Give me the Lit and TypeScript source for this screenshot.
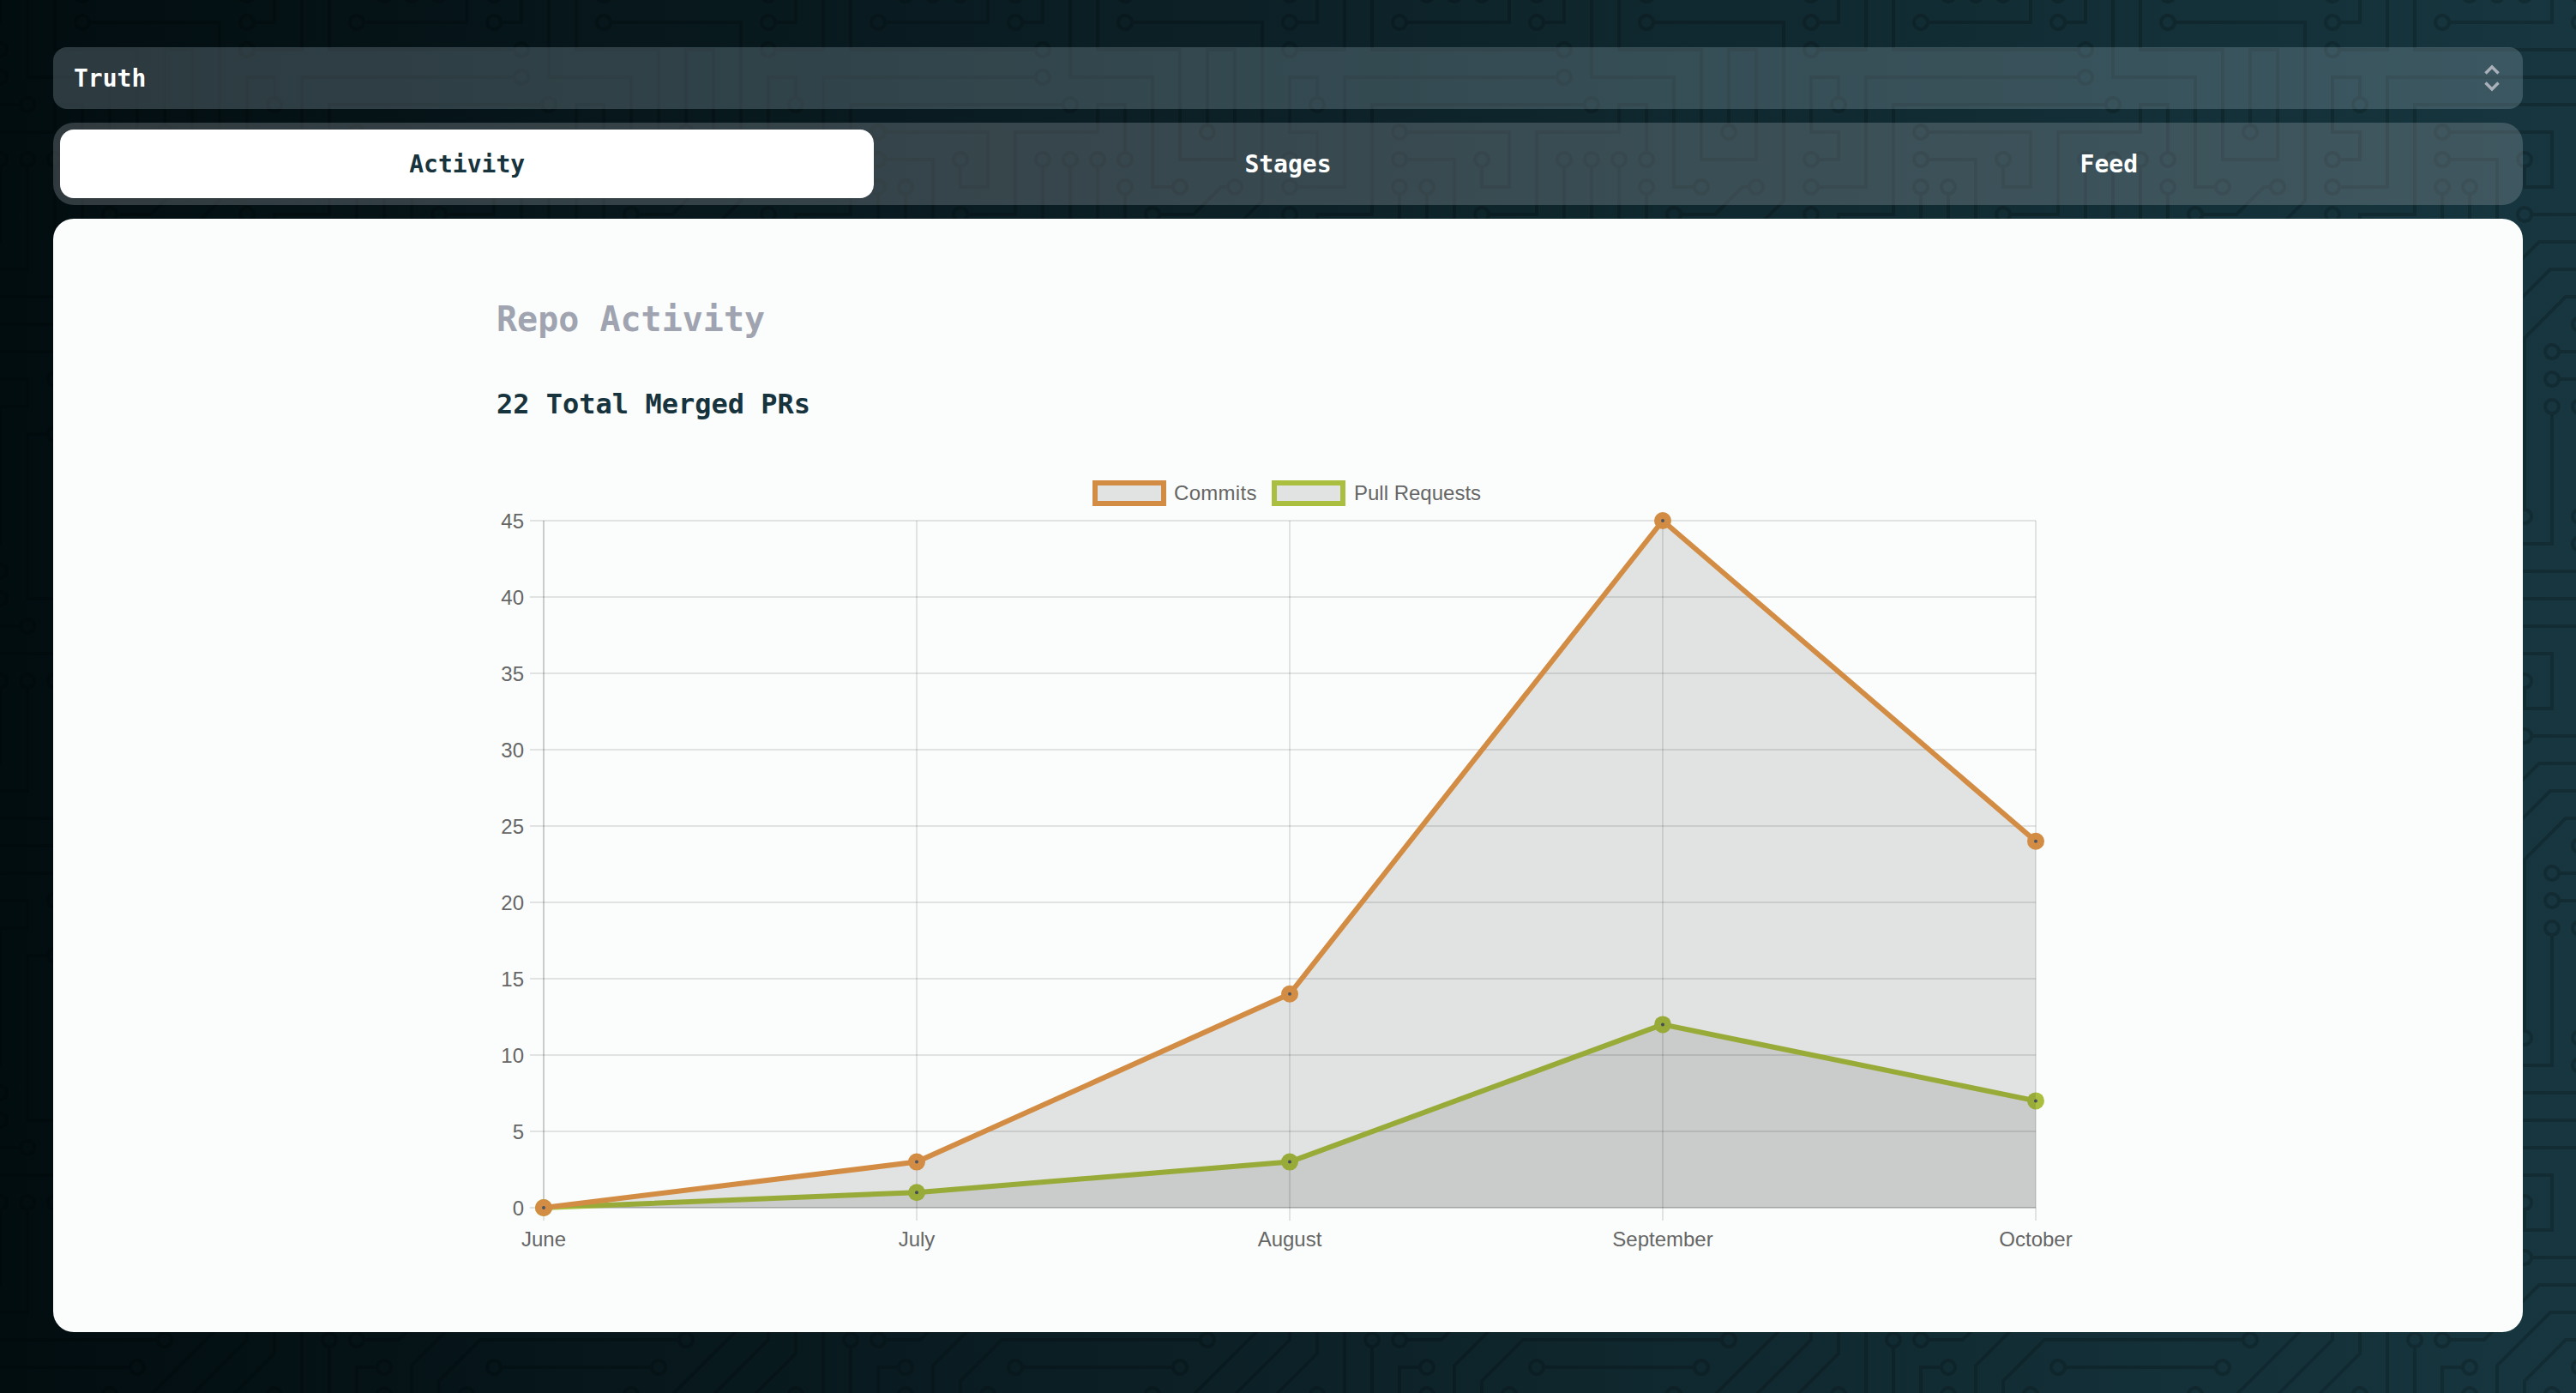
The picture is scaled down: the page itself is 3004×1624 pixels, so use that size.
import { LitElement, css, html, svg } from "lit";
import { customElement, state } from "lit/decorators.js";

// hero pattern "circuit board", drawn at 2x
const CIRCUIT =
  "M44.1 224a5 5 0 1 1 0 2H0v-2h44.1zm160 48a5 5 0 1 1 0 2H82v-2h122.1zm57.8-46a5 5 0 1 1 0-2H304v2h-42.1zm0 16a5 5 0 1 1 0-2H304v2h-42.1zm6.2-114a5 5 0 1 1 0 2h-86.2a5 5 0 1 1 0-2h86.2zm-256-48a5 5 0 1 1 0 2H0v-2h12.1zm185.8 34a5 5 0 1 1 0-2h86.2a5 5 0 1 1 0 2h-86.2zM258 12.1a5 5 0 1 1-2 0V0h2v12.1zm-64 208a5 5 0 1 1-2 0v-54.2a5 5 0 1 1 2 0v54.2zm48-198.2V80h62v2h-64V21.9a5 5 0 1 1 2 0zm16 16V64h46v2h-48V37.9a5 5 0 1 1 2 0zm-128 96V208h16v12.1a5 5 0 1 1-2 0V210h-16v-76.1a5 5 0 1 1 2 0zm-5.9-21.9a5 5 0 1 1 0 2H114v48H85.9a5 5 0 1 1 0-2H112v-48h12.1zm-6.2 130a5 5 0 1 1 0-2H176v-74.1a5 5 0 1 1 2 0V242h-60.1zm-16-64a5 5 0 1 1 0-2H114v48h10.1a5 5 0 1 1 0 2H112v-48h-10.1zM66 284.1a5 5 0 1 1-2 0V274H50v30h-2v-32h18v12.1zM236.1 176a5 5 0 1 1 0 2H226v94h48v32h-2v-30h-48v-98h12.1zm25.8-30a5 5 0 1 1 0-2H274v44.1a5 5 0 1 1-2 0V146h-10.1zm-64 96a5 5 0 1 1 0-2H208v-80h16v-14h-42.1a5 5 0 1 1 0-2H226v18h-16v80h-12.1zm86.2-210a5 5 0 1 1 0 2H272V0h2v32h10.1zM98 101.9V146H53.9a5 5 0 1 1 0-2H96v-42.1a5 5 0 1 1 2 0zM53.9 34a5 5 0 1 1 0-2H80V0h2v34H53.9zm60.1 3.9V66H82v64H69.9a5 5 0 1 1 0-2H80V64h32V37.9a5 5 0 1 1 2 0zM101.9 82a5 5 0 1 1 0-2H128V37.9a5 5 0 1 1 2 0V82h-28.1zm16-64a5 5 0 1 1 0-2H146v44.1a5 5 0 1 1-2 0V18h-26.1zm102.2 270a5 5 0 1 1 0 2H98v14h-2v-16h124.1zM242 149.9V160h16v34h-16v62h48v48h-2v-46h-48v-66h16v-30h-16v-12.1a5 5 0 1 1 2 0zM53.9 18a5 5 0 1 1 0-2H64V2H48V0h18v18H53.9zm112 32a5 5 0 1 1 0-2H192V0h50v2h-48v48h-28.1zm-48-48a5 5 0 0 1-9.8-2h2.07a3 3 0 1 0 5.66 0H178v34h-18V21.9a5 5 0 1 1 2 0V32h14V2h-58.1zm0 96a5 5 0 1 1 0-2H137l32-32h39V21.9a5 5 0 1 1 2 0V66h-40.17l-32 32H117.9zm28.1 90.1a5 5 0 1 1-2 0v-76.51L175.59 80H224V21.9a5 5 0 1 1 2 0V82h-49.59L146 112.41v75.69zm16 32a5 5 0 1 1-2 0v-99.51L184.59 96H300.1a5 5 0 0 1 3.9-3.9v2.07a3 3 0 0 0 0 5.66v2.07a5 5 0 0 1-3.9-3.9H185.41L162 121.41v98.69zm-144-64a5 5 0 1 1-2 0v-3.51l48-48V48h32V0h2v50H66v55.41l-48 48v2.69zM50 53.9v43.51l-48 48V208h26.1a5 5 0 1 1 0 2H0v-65.41l48-48V53.9a5 5 0 1 1 2 0zm-16 16V89.41l-34 34v-2.82l32-32V69.9a5 5 0 1 1 2 0zM12.1 32a5 5 0 1 1 0 2H9.41L0 43.41V40.6L8.59 32h3.51zm265.8 18a5 5 0 1 1 0-2h18.69l7.41-7.41v2.82L297.41 50H277.9zm-16 160a5 5 0 1 1 0-2H288v-71.41l16-16v2.82l-14 14V210h-28.1zm-208 32a5 5 0 1 1 0-2H64v-22.59L40.59 194H21.9a5 5 0 1 1 0-2H41.41L66 216.59V242H53.9zm150.2 14a5 5 0 1 1 0 2H96v-56.6L56.6 162H37.9a5 5 0 1 1 0-2h19.5L98 200.6V256h106.1zm-150.2 2a5 5 0 1 1 0-2H80v-46.59L48.59 178H21.9a5 5 0 1 1 0-2H49.41L82 208.59V258H53.9zM34 39.8v1.61L9.41 66H0v-2h8.59L32 40.59V0h2v39.8zM2 300.1a5 5 0 0 1 3.9 3.9H3.83A3 3 0 0 0 0 302.17V256h18v48h-2v-46H2v42.1zM34 241v63h-2v-62H0v-2h34v1zM17 18H0v-2h16V0h2v18h-1zm273-2h14v2h-16V0h2v16zm-32 273v15h-2v-14h-14v14h-2v-16h18v1zM0 92.1A5.02 5.02 0 0 1 6 97a5 5 0 0 1-6 4.9v-2.07a3 3 0 1 0 0-5.66V92.1zM80 272h2v32h-2v-32zm37.9 32h-2.07a3 3 0 0 0-5.66 0h-2.07a5 5 0 0 1 9.8 0zM5.9 0A5.02 5.02 0 0 1 0 5.9V3.83A3 3 0 0 0 3.83 0H5.9zm294.2 0h2.07A3 3 0 0 0 304 3.83V5.9a5 5 0 0 1-3.9-5.9zm3.9 300.1v2.07a3 3 0 0 0-1.83 1.83h-2.07a5 5 0 0 1 3.9-3.9zM97 100a3 3 0 1 0 0-6 3 3 0 0 0 0 6zm0-16a3 3 0 1 0 0-6 3 3 0 0 0 0 6zm16 16a3 3 0 1 0 0-6 3 3 0 0 0 0 6zm16 16a3 3 0 1 0 0-6 3 3 0 0 0 0 6zm0 16a3 3 0 1 0 0-6 3 3 0 0 0 0 6zm-48 32a3 3 0 1 0 0-6 3 3 0 0 0 0 6zm16 16a3 3 0 1 0 0-6 3 3 0 0 0 0 6zm32 48a3 3 0 1 0 0-6 3 3 0 0 0 0 6zm-16 16a3 3 0 1 0 0-6 3 3 0 0 0 0 6zm32-16a3 3 0 1 0 0-6 3 3 0 0 0 0 6zm0-32a3 3 0 1 0 0-6 3 3 0 0 0 0 6zm16 32a3 3 0 1 0 0-6 3 3 0 0 0 0 6zm32 16a3 3 0 1 0 0-6 3 3 0 0 0 0 6zm0-16a3 3 0 1 0 0-6 3 3 0 0 0 0 6zm-16-64a3 3 0 1 0 0-6 3 3 0 0 0 0 6zm16 0a3 3 0 1 0 0-6 3 3 0 0 0 0 6zm16 96a3 3 0 1 0 0-6 3 3 0 0 0 0 6zm0 16a3 3 0 1 0 0-6 3 3 0 0 0 0 6zm16 16a3 3 0 1 0 0-6 3 3 0 0 0 0 6zm16-144a3 3 0 1 0 0-6 3 3 0 0 0 0 6zm0 32a3 3 0 1 0 0-6 3 3 0 0 0 0 6zm16-32a3 3 0 1 0 0-6 3 3 0 0 0 0 6zm16-16a3 3 0 1 0 0-6 3 3 0 0 0 0 6zm-96 0a3 3 0 1 0 0-6 3 3 0 0 0 0 6zm0 16a3 3 0 1 0 0-6 3 3 0 0 0 0 6zm16-32a3 3 0 1 0 0-6 3 3 0 0 0 0 6zm96 0a3 3 0 1 0 0-6 3 3 0 0 0 0 6zm-16-64a3 3 0 1 0 0-6 3 3 0 0 0 0 6zm16-16a3 3 0 1 0 0-6 3 3 0 0 0 0 6zm-32 0a3 3 0 1 0 0-6 3 3 0 0 0 0 6zm0-16a3 3 0 1 0 0-6 3 3 0 0 0 0 6zm-16 0a3 3 0 1 0 0-6 3 3 0 0 0 0 6zm-16 0a3 3 0 1 0 0-6 3 3 0 0 0 0 6zm-16 0a3 3 0 1 0 0-6 3 3 0 0 0 0 6zM49 36a3 3 0 1 0 0-6 3 3 0 0 0 0 6zm-32 0a3 3 0 1 0 0-6 3 3 0 0 0 0 6zm32 16a3 3 0 1 0 0-6 3 3 0 0 0 0 6zM33 68a3 3 0 1 0 0-6 3 3 0 0 0 0 6zm16-48a3 3 0 1 0 0-6 3 3 0 0 0 0 6zm0 240a3 3 0 1 0 0-6 3 3 0 0 0 0 6zm16 32a3 3 0 1 0 0-6 3 3 0 0 0 0 6zm-16-64a3 3 0 1 0 0-6 3 3 0 0 0 0 6zm0 16a3 3 0 1 0 0-6 3 3 0 0 0 0 6zm-16-32a3 3 0 1 0 0-6 3 3 0 0 0 0 6zm80-176a3 3 0 1 0 0-6 3 3 0 0 0 0 6zm16 0a3 3 0 1 0 0-6 3 3 0 0 0 0 6zm-16-16a3 3 0 1 0 0-6 3 3 0 0 0 0 6zm32 48a3 3 0 1 0 0-6 3 3 0 0 0 0 6zm16-16a3 3 0 1 0 0-6 3 3 0 0 0 0 6zm0-32a3 3 0 1 0 0-6 3 3 0 0 0 0 6zm112 176a3 3 0 1 0 0-6 3 3 0 0 0 0 6zm-16 16a3 3 0 1 0 0-6 3 3 0 0 0 0 6zm0 16a3 3 0 1 0 0-6 3 3 0 0 0 0 6zm0 16a3 3 0 1 0 0-6 3 3 0 0 0 0 6zM17 180a3 3 0 1 0 0-6 3 3 0 0 0 0 6zm0 16a3 3 0 1 0 0-6 3 3 0 0 0 0 6zm0-32a3 3 0 1 0 0-6 3 3 0 0 0 0 6zm16 0a3 3 0 1 0 0-6 3 3 0 0 0 0 6zM17 84a3 3 0 1 0 0-6 3 3 0 0 0 0 6zm32 64a3 3 0 1 0 0-6 3 3 0 0 0 0 6zm16-16a3 3 0 1 0 0-6 3 3 0 0 0 0 6z";

const MONTHS = ["June", "July", "August", "September", "October"];
const TICKS = [0, 5, 10, 15, 20, 25, 30, 35, 40, 45];
const COMMITS = [0, 3, 14, 45, 24];
const PULLS = [0, 1, 3, 12, 7];

// plot geometry, local to the chart svg
const LEFT = 53;
const TOP = 62;
const STEP_X = 435;
const UNIT_Y = 17.8;
const BASE = TOP + 45 * UNIT_Y;
const RIGHT = LEFT + 4 * STEP_X;

const px = (i: number) => LEFT + i * STEP_X;
const py = (v: number) => BASE - v * UNIT_Y;

@customElement("activity-chart")
export class ActivityChart extends LitElement {
  private series(values: number[], color: string) {
    const line = values.map((v, i) => `${px(i)},${py(v)}`).join(" ");
    const area = `${LEFT},${BASE} ${line} ${RIGHT},${BASE}`;
    return svg`
      <polygon class="area" points=${area}></polygon>
      <polyline class="line" points=${line} stroke=${color}></polyline>
      ${values.map(
        (v, i) => svg`
          <circle cx=${px(i)} cy=${py(v)} r="10" fill=${color}></circle>
          <circle class="dot" cx=${px(i)} cy=${py(v)} r="2"></circle>
        `,
      )}
    `;
  }

  protected render() {
    return html`
      <svg viewBox="0 0 1842 945" width="1842" height="945">
        <rect class="legend-box" x="696" y="18" width="80" height="24" stroke="#d28c44"></rect>
        <text class="label commits" x="788" y="29.5">Commits</text>
        <rect class="legend-box" x="905" y="18" width="80" height="24" stroke="#aabf3f"></rect>
        <text class="label" x="998" y="29.5">Pull Requests</text>

        ${TICKS.map(
          (t) => svg`
            <line class="grid" x1=${LEFT - 16} x2=${RIGHT} y1=${py(t)} y2=${py(t)}></line>
            <text class="label tick-y" x=${LEFT - 23} y=${py(t)}>${t}</text>
          `,
        )}
        ${MONTHS.map(
          (m, i) => svg`
            <line class="grid" x1=${px(i)} x2=${px(i)} y1=${TOP} y2=${BASE + 15}></line>
            <text class="label tick-x" x=${px(i)} y=${BASE + 36}>${m}</text>
          `,
        )}
        <line class="grid" x1=${LEFT} x2=${LEFT} y1=${TOP} y2=${BASE}></line>
        <line class="grid" x1=${LEFT} x2=${RIGHT} y1=${BASE} y2=${BASE}></line>

        ${this.series(PULLS, "#aabf3f")}
        ${this.series(COMMITS, "#d28c44")}
      </svg>
    `;
  }

  static styles = css`
    :host {
      display: block;
    }
    svg {
      display: block;
    }
    .label {
      font-family: "Liberation Sans", Arial, sans-serif;
      font-size: 24px;
      fill: #666;
      dominant-baseline: central;
    }
    .commits {
      letter-spacing: 0.3px;
    }
    .tick-y {
      text-anchor: end;
    }
    .tick-x {
      text-anchor: middle;
    }
    .grid {
      stroke: rgba(0, 0, 0, 0.1);
      stroke-width: 2;
    }
    .area {
      fill: rgba(0, 0, 0, 0.1);
    }
    .line {
      fill: none;
      stroke-width: 6;
    }
    .dot {
      fill: #4b5563;
    }
    .legend-box {
      fill: rgba(0, 0, 0, 0.1);
      stroke-width: 6;
    }
  `;
}

@customElement("app-root")
export class AppRoot extends LitElement {
  @state() private tab = "Activity";

  protected render() {
    return html`
      <svg class="backdrop" width="100%" height="100%">
        <defs>
          <pattern id="circuit" x="190" y="152" width="608" height="608" patternUnits="userSpaceOnUse">
            <path transform="scale(2)" d=${CIRCUIT} fill-rule="evenodd"></path>
          </pattern>
        </defs>
        <rect width="100%" height="100%" fill="url(#circuit)"></rect>
      </svg>
      <main>
        <div class="select">
          <span>Truth</span>
          <svg class="chevrons" viewBox="0 0 20 32" width="20" height="32">
            <path d="M2.5 10.5 10 3l7.5 7.5M2.5 21.5 10 29l7.5-7.5"></path>
          </svg>
        </div>
        <nav class="tabs">
          ${["Activity", "Stages", "Feed"].map(
            (t) => html`
              <button class=${t === this.tab ? "active" : ""} @click=${() => (this.tab = t)}>
                ${t}
              </button>
            `,
          )}
        </nav>
        <section class="card">
          <div class="inner">
            <h2>Repo Activity</h2>
            <h3>22 Total Merged PRs</h3>
            <activity-chart></activity-chart>
          </div>
        </section>
      </main>
    `;
  }

  static styles = css`
    :host {
      display: block;
      position: relative;
      min-height: 1624px;
      background: linear-gradient(90deg, #020d10, #17363f);
      font-family: "DejaVu Sans Mono", "Liberation Mono", monospace;
    }
    .backdrop {
      position: absolute;
      inset: 0;
      opacity: 0.17;
    }
    main {
      position: relative;
      display: flex;
      flex-direction: column;
      gap: 16px;
      padding: 55px 62px 71px;
    }
    .select {
      display: flex;
      align-items: center;
      justify-content: space-between;
      height: 72px;
      padding: 0 26px 0 24px;
      border-radius: 16px;
      background: rgba(158, 182, 193, 0.27);
      color: #fff;
      font-size: 28px;
      font-weight: 700;
    }
    .chevrons {
      fill: none;
      stroke: #aab1ba;
      stroke-width: 3.5;
    }
    .tabs {
      display: grid;
      grid-template-columns: repeat(3, 1fr);
      gap: 8px;
      padding: 8px;
      border-radius: 24px;
      background: rgba(172, 181, 189, 0.27);
    }
    button {
      height: 80px;
      border: none;
      border-radius: 16px;
      background: transparent;
      color: #fff;
      font: inherit;
      font-size: 28px;
      font-weight: 700;
      padding: 0;
    }
    button.active {
      background: #fff;
      color: #17333d;
    }
    .card {
      height: 1298px;
      box-sizing: border-box;
      padding-top: 87px;
      border-radius: 24px;
      background: #fbfdfc;
    }
    .inner {
      width: 1842px;
      margin-inline: auto;
    }
    h2 {
      margin: 0 0 0 -2px;
      font-size: 40px;
      line-height: 60px;
      font-weight: 700;
      color: #a0a4b0;
    }
    h3 {
      margin: 45px 0 50px -2px;
      font-size: 32px;
      line-height: 48px;
      font-weight: 700;
      color: #17333d;
    }
  `;
}
